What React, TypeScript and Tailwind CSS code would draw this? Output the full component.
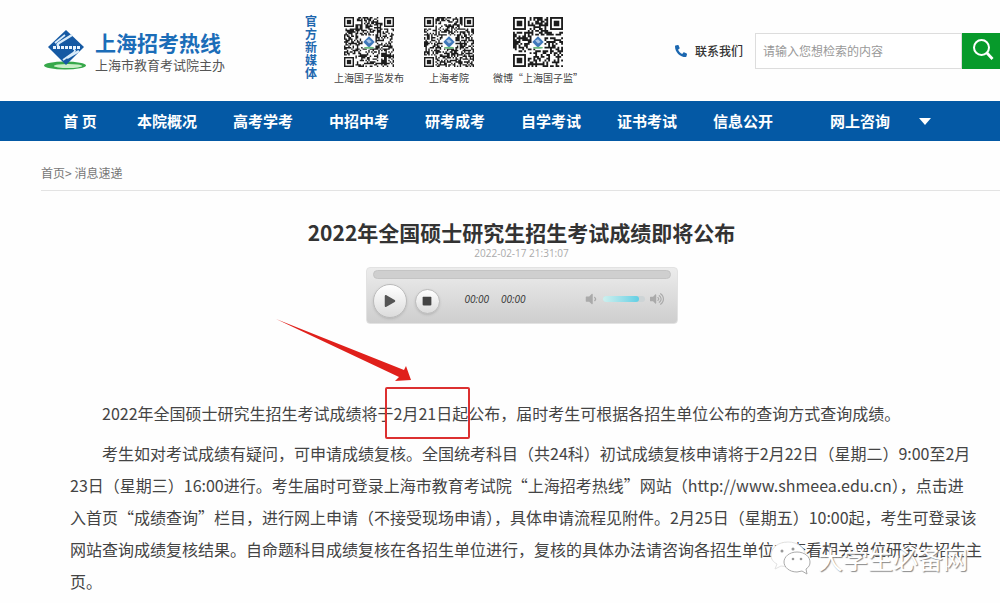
import React from "react";
import { FaPhone, FaPlay, FaStop, FaVolumeDown, FaVolumeUp } from "react-icons/fa";

const FONT = "font-['Noto_Sans_CJK_SC','Noto_Sans',sans-serif]";

function inFinder(x: number, y: number, n: number) {
  const near = (v: number) => v < 8;
  const far = (v: number) => v >= n - 8;
  return (near(x) && near(y)) || (far(x) && near(y)) || (near(x) && far(y));
}

function qrPath(n: number, seed: number) {
  let s = seed;
  let d = "";
  const mid = (n - 1) / 2;
  for (let y = 0; y < n; y++) {
    for (let x = 0; x < n; x++) {
      s = (s * 1103515245 + 12345) % 2147483648;
      const centre = Math.abs(x - mid) < n / 7 && Math.abs(y - mid) < n / 7;
      if (!inFinder(x, y, n) && !centre && s / 2147483648 > 0.48) d += `M${x} ${y}h1v1h-1z`;
    }
  }
  return d;
}

function QrCode({ modules, seed, label }: { modules: number; seed: number; label: string }) {
  const n = modules;
  const m = n / 2;
  return (
    <svg className="size-[50px]" viewBox={`0 0 ${n} ${n}`} role="img" aria-label={label}>
      <path d={qrPath(n, seed)} fill="#1c1c1c" />
      {[[0, 0], [n - 7, 0], [0, n - 7]].map(([x, y]) => (
        <g key={`${x}-${y}`} fill="#1c1c1c">
          <rect x={x + 0.5} y={y + 0.5} width="6" height="6" fill="none" stroke="#1c1c1c" />
          <rect x={x + 2} y={y + 2} width="3" height="3" />
        </g>
      ))}
      <g transform={`translate(${m} ${m}) scale(${n / 35})`}>
        <path d="M0-4 4 0 0 4-4 0z" fill="#3f78bb" />
        <path d="M-2-1 0-2 2 0 0 1z" fill="#a8c6e6" />
        <ellipse cy="4" rx="3.5" ry=".7" fill="#6dbb80" />
      </g>
    </svg>
  );
}

function Logo() {
  return (
    <svg className="h-[42px] w-[44px] shrink-0" viewBox="0 0 44 42" aria-hidden="true">
      <ellipse cx="22" cy="36.500" rx="21" ry="4" fill="#37a84a" />
      <ellipse cx="25" cy="37" rx="14" ry="2" fill="#c9efc7" />
      <path d="M23 1 41 18 23 36 5 18z" fill="#1559a3" />
      <path d="M29 6 16 14q-3 2 0 3M36 22 24 29" fill="none" stroke="#d8ebfa" strokeWidth="2.400" />
      <path d="M22 6 12 14M30 20q4 1 0 4l-10 7" fill="none" stroke="#d8ebfa" strokeWidth="1.800" />
      <path d="M10 18.500h27" stroke="#eaf5ff" strokeWidth="3" strokeDasharray="3 1" />
    </svg>
  );
}

const media = [
  { label: "上海国子监发布", modules: 35, seed: 71, width: "w-[74px]" },
  { label: "上海考院", modules: 35, seed: 913, width: "w-[74px]" },
  { label: "微博“上海国子监”", modules: 27, seed: 4021, width: "w-[92px]" },
];

const nav = ["本院概况", "高考学考", "中招中考", "研考成考", "自学考试", "证书考试", "信息公开"];

function Header() {
  return (
    <header className="flex h-[101px] items-start">
      <a href="#" className="mt-[29px] ml-[43px] flex w-[200px] gap-2">
        <Logo />
        <span className="flex flex-col whitespace-nowrap">
          <span className="text-[21px] leading-[26px] font-bold text-[#1b6db8]">上海招考热线</span>
          <span className="text-[13px] leading-[20px] text-[#555]">上海市教育考试院主办</span>
        </span>
      </a>
      <div className="mt-[14px] ml-[62px] w-3 text-[12px] leading-[13px] font-bold break-all text-[#1e67ae]">官方新媒体</div>
      <ul className="mt-[17px] ml-[15px] flex gap-[6px]">
        {media.map((m) => (
          <li key={m.label} className={`flex flex-col items-center ${m.width}`}>
            <QrCode modules={m.modules} seed={m.seed} label={m.label} />
            <span className="mt-[5px] text-[10px] leading-3 whitespace-nowrap text-[#444]">{m.label}</span>
          </li>
        ))}
      </ul>
      <a href="#" className="mt-[41px] ml-auto flex items-center gap-2 text-[12px] leading-5 font-medium whitespace-nowrap text-[#333]">
        <FaPhone className="size-3 -scale-x-100 text-[#1b67b0]" />
        联系我们
      </a>
      <form className="mt-[33px] ml-3 flex h-9" onSubmit={(e) => e.preventDefault()}>
        <input
          type="search"
          aria-label="检索内容"
          placeholder="请输入您想检索的内容"
          className="w-[207px] border border-[#ddd] bg-white px-[7px] pb-px text-[12px] text-[#333] outline-none placeholder:text-[#999]"
        />
        <button type="submit" aria-label="搜索" className="flex w-[38px] items-center justify-center bg-[#079a2b] pb-1 pl-1">
          <svg className="size-[22px]" viewBox="0 0 22 22" fill="none" stroke="#fff" aria-hidden="true">
            <circle cx="9.500" cy="9.500" r="7.500" strokeWidth="2" />
            <path d="m15 15 5.500 6" strokeWidth="2.800" />
          </svg>
        </button>
      </form>
    </header>
  );
}

function Nav() {
  return (
    <nav className="flex h-10 items-center bg-[#0459a5] text-[15px] leading-5 font-bold whitespace-nowrap text-white">
      <ul className="flex pl-[41px]">
        <li className="w-[78px] text-center">
          <a href="#">首 页</a>
        </li>
        {nav.map((item) => (
          <li key={item} className="w-24 text-center">
            <a href="#">{item}</a>
          </li>
        ))}
      </ul>
      <button type="button" className="ml-[39px] flex items-center gap-[29px]">
        网上咨询
        <svg className="h-[7px] w-3" viewBox="0 0 12 7" aria-hidden="true">
          <path d="M0 0h12L6 7z" fill="#fff" />
        </svg>
      </button>
    </nav>
  );
}

function Player() {
  return (
    <section
      aria-label="音频播放器"
      className="flex w-[312px] flex-col rounded border border-[#e2e2e2] bg-linear-to-b from-[#ececec] to-[#cecece] px-[6px] pt-[2px] pb-1"
    >
      <div className="h-[9px] rounded-full border border-[#c4c4c4] bg-[#cfcfcf]" />
      <div className="mt-1 flex h-9 items-center">
        <button
          type="button"
          aria-label="播放"
          className="flex size-[34px] items-center justify-center rounded-full border border-[#bbb] bg-linear-to-b from-white to-[#dcdcdc] shadow"
        >
          <FaPlay className="size-3 text-[#555]" />
        </button>
        <button
          type="button"
          aria-label="停止"
          className="ml-2 flex size-[25px] items-center justify-center rounded-full border border-[#bbb] bg-linear-to-b from-white to-[#dcdcdc] shadow"
        >
          <FaStop className="size-[10px] text-[#444]" />
        </button>
        <span className="mb-1 ml-[25px] flex gap-3 font-['Open_Sans',sans-serif] text-[10px] leading-4 text-[#333] italic">
          <span>00:00</span>
          <span>00:00</span>
        </span>
        <span className="mr-[7px] mb-1 ml-auto flex items-center gap-[5px] text-[#aaa]">
          <FaVolumeDown className="size-[14px]" />
          <span className="flex h-[6px] w-[42px] rounded-full bg-[#cdd4d6]">
            <span className="w-9 rounded-full bg-linear-to-r from-[#cdf0ee] to-[#5fcfe4]" />
          </span>
          <FaVolumeUp className="size-[14px]" />
        </span>
      </div>
    </section>
  );
}

function Watermark() {
  return (
    <div className="pointer-events-none absolute top-[540px] right-8 flex items-center gap-1">
      <svg className="h-9 w-11" viewBox="0 0 44 36" fill="#fff" stroke="#aaa" aria-hidden="true">
        <path d="M18 2C8 2 1 8 1 15c0 4 2 7 6 9l-2 5 6-3c10 2 23-2 24-11C35 8 28 2 18 2z" stroke="#e2e2e2" />
        <path d="M27 12c-8 0-13 5-13 10s5 10 13 10l5-1 5 3-1-5c3-2 4-4 4-7 0-5-5-10-13-10z" />
        <g fill="#999" stroke="none">
          <circle cx="12" cy="11" r="1.500" />
          <circle cx="23" cy="9" r="1.500" />
          <circle cx="23" cy="19" r="1.300" />
          <circle cx="31" cy="19" r="1.300" />
        </g>
      </svg>
      <span className="text-[25px] leading-9 whitespace-nowrap text-white [text-shadow:1px_1px_1px_#888]">大学生必备网</span>
    </div>
  );
}

const paragraph = [
  "考生如对考试成绩有疑问，可申请成绩复核。全国统考科目（共24科）初试成绩复核申请将于2月22日（星期二）9:00至2月",
  "23日（星期三）16:00进行。考生届时可登录上海市教育考试院“上海招考热线”网站（http://www.shmeea.edu.cn），点击进",
  "入首页“成绩查询”栏目，进行网上申请（不接受现场申请），具体申请流程见附件。2月25日（星期五）10:00起，考生可登录该",
  "网站查询成绩复核结果。自命题科目成绩复核在各招生单位进行，复核的具体办法请咨询各招生单位或查看相关单位研究生招生主",
  "页。",
];

export default function App() {
  return (
    <div lang="zh-CN" className={`relative min-h-screen overflow-hidden bg-[#fefefe] ${FONT}`}>
      <Header />
      <Nav />
      <main>
        <div className="ml-[41px] border-b border-[#e3e3e3] pt-[22px] pb-[7px] text-[12px] leading-5 text-[#777]">
          <a href="#">首页</a>&gt; <a href="#">消息速递</a>
        </div>
        <article>
          <div className="ml-[43px] flex flex-col items-center pt-[26px]">
            <h1 className="text-[21px] leading-[30px] font-bold whitespace-nowrap text-[#333]">
              2022年全国硕士研究生招生考试成绩即将公布
            </h1>
            <time className="mb-2 font-['Open_Sans',sans-serif] text-[10px] leading-3 text-[#aaa]">2022-02-17 21:31:07</time>
            <Player />
          </div>
          <div className="mt-[73px] ml-[70px] text-[16px] leading-8 whitespace-nowrap text-[#444]">
            <p className="mb-2 indent-8">
              2022年全国硕士研究生招生考试成绩将于2月21日起公布，届时考生可根据各招生单位公布的查询方式查询成绩。
            </p>
            <p className="indent-8">
              {paragraph.map((line) => (
                <React.Fragment key={line}>
                  {line}
                  <br />
                </React.Fragment>
              ))}
            </p>
          </div>
        </article>
      </main>
      <svg className="pointer-events-none absolute top-[317px] left-[275px] h-[66px] w-[138px]" viewBox="0 0 138 66" aria-hidden="true">
        <path d="M1 2 129 53 131 49 136 63 120 64 124 60z" fill="#e0201b" />
      </svg>
      <div className="pointer-events-none absolute top-[387px] left-[385px] h-[52px] w-[85px] rounded-xs border-2 border-[#dc3030]" />
      <Watermark />
    </div>
  );
}
